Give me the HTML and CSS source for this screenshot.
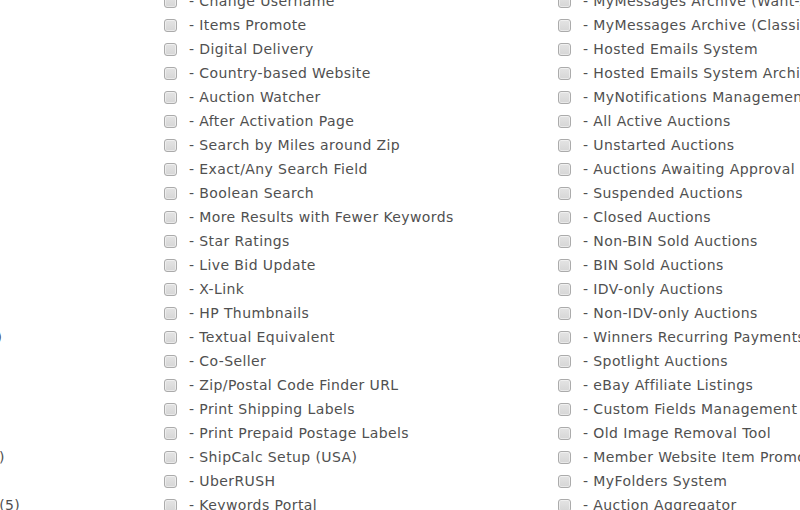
FILE: index.html
```html
<!DOCTYPE html>
<html>
<head>
<meta charset="utf-8">
<link rel="stylesheet" href="styles.css">
</head>
<body>
<div class="page">
  <div class="cols">
    <ul class="col">
      <li class="item"><span class="cb"></span><span class="lbl">- Featured Items</span></li>
      <li class="item"><span class="cb"></span><span class="lbl">- Bold Listing</span></li>
      <li class="item"><span class="cb"></span><span class="lbl">- Highlighted</span></li>
      <li class="item"><span class="cb"></span><span class="lbl">- Gallery Listing</span></li>
      <li class="item"><span class="cb"></span><span class="lbl">- Buy Out Option</span></li>
      <li class="item"><span class="cb"></span><span class="lbl">- Make Offer</span></li>
      <li class="item"><span class="cb"></span><span class="lbl">- Reserve Price</span></li>
      <li class="item"><span class="cb"></span><span class="lbl">- Quantity</span></li>
      <li class="item"><span class="cb"></span><span class="lbl">- Buy Now</span></li>
      <li class="item"><span class="cb"></span><span class="lbl">- Swap Items</span></li>
      <li class="item"><span class="cb"></span><span class="lbl">- Dutch Auctions</span></li>
      <li class="item"><span class="cb"></span><span class="lbl">- Wanted Ads</span></li>
      <li class="item"><span class="cb"></span><span class="lbl">- Classifieds</span></li>
      <li class="item"><span class="cb"></span><span class="lbl">- Bulk Lister</span></li>
      <li class="item"><span class="cb"></span><span class="lbl">- Second Chance Offer (sco)</span></li>
      <li class="item"><span class="cb"></span><span class="lbl">- Auto Relist</span></li>
      <li class="item"><span class="cb"></span><span class="lbl">- Stores</span></li>
      <li class="item"><span class="cb"></span><span class="lbl">- Shipping</span></li>
      <li class="item"><span class="cb"></span><span class="lbl">- Seller Fees</span></li>
      <li class="item"><span class="cb"></span><span class="lbl">- Reverse Auctions (Bidding)</span></li>
      <li class="item"><span class="cb"></span><span class="lbl">- Tax Settings</span></li>
      <li class="item"><span class="cb"></span><span class="lbl">- Additional Image Uploads (5)</span></li>
    </ul>
    <ul class="col">
      <li class="item"><span class="cb"></span><span class="lbl">- Change Username</span></li>
      <li class="item"><span class="cb"></span><span class="lbl">- Items Promote</span></li>
      <li class="item"><span class="cb"></span><span class="lbl">- Digital Delivery</span></li>
      <li class="item"><span class="cb"></span><span class="lbl">- Country-based Website</span></li>
      <li class="item"><span class="cb"></span><span class="lbl">- Auction Watcher</span></li>
      <li class="item"><span class="cb"></span><span class="lbl">- After Activation Page</span></li>
      <li class="item"><span class="cb"></span><span class="lbl">- Search by Miles around Zip</span></li>
      <li class="item"><span class="cb"></span><span class="lbl">- Exact/Any Search Field</span></li>
      <li class="item"><span class="cb"></span><span class="lbl">- Boolean Search</span></li>
      <li class="item"><span class="cb"></span><span class="lbl">- More Results with Fewer Keywords</span></li>
      <li class="item"><span class="cb"></span><span class="lbl">- Star Ratings</span></li>
      <li class="item"><span class="cb"></span><span class="lbl">- Live Bid Update</span></li>
      <li class="item"><span class="cb"></span><span class="lbl">- X-Link</span></li>
      <li class="item"><span class="cb"></span><span class="lbl">- HP Thumbnails</span></li>
      <li class="item"><span class="cb"></span><span class="lbl">- Textual Equivalent</span></li>
      <li class="item"><span class="cb"></span><span class="lbl">- Co-Seller</span></li>
      <li class="item"><span class="cb"></span><span class="lbl">- Zip/Postal Code Finder URL</span></li>
      <li class="item"><span class="cb"></span><span class="lbl">- Print Shipping Labels</span></li>
      <li class="item"><span class="cb"></span><span class="lbl">- Print Prepaid Postage Labels</span></li>
      <li class="item"><span class="cb"></span><span class="lbl">- ShipCalc Setup (USA)</span></li>
      <li class="item"><span class="cb"></span><span class="lbl">- UberRUSH</span></li>
      <li class="item"><span class="cb"></span><span class="lbl">- Keywords Portal</span></li>
    </ul>
    <ul class="col">
      <li class="item"><span class="cb"></span><span class="lbl">- MyMessages Archive (Want-Ads)</span></li>
      <li class="item"><span class="cb"></span><span class="lbl">- MyMessages Archive (Classifieds)</span></li>
      <li class="item"><span class="cb"></span><span class="lbl">- Hosted Emails System</span></li>
      <li class="item"><span class="cb"></span><span class="lbl">- Hosted Emails System Archive</span></li>
      <li class="item"><span class="cb"></span><span class="lbl">- MyNotifications Management</span></li>
      <li class="item"><span class="cb"></span><span class="lbl">- All Active Auctions</span></li>
      <li class="item"><span class="cb"></span><span class="lbl">- Unstarted Auctions</span></li>
      <li class="item"><span class="cb"></span><span class="lbl">- Auctions Awaiting Approval</span></li>
      <li class="item"><span class="cb"></span><span class="lbl">- Suspended Auctions</span></li>
      <li class="item"><span class="cb"></span><span class="lbl">- Closed Auctions</span></li>
      <li class="item"><span class="cb"></span><span class="lbl">- Non-BIN Sold Auctions</span></li>
      <li class="item"><span class="cb"></span><span class="lbl">- BIN Sold Auctions</span></li>
      <li class="item"><span class="cb"></span><span class="lbl">- IDV-only Auctions</span></li>
      <li class="item"><span class="cb"></span><span class="lbl">- Non-IDV-only Auctions</span></li>
      <li class="item"><span class="cb"></span><span class="lbl">- Winners Recurring Payments</span></li>
      <li class="item"><span class="cb"></span><span class="lbl">- Spotlight Auctions</span></li>
      <li class="item"><span class="cb"></span><span class="lbl">- eBay Affiliate Listings</span></li>
      <li class="item"><span class="cb"></span><span class="lbl">- Custom Fields Management</span></li>
      <li class="item"><span class="cb"></span><span class="lbl">- Old Image Removal Tool</span></li>
      <li class="item"><span class="cb"></span><span class="lbl">- Member Website Item Promotion</span></li>
      <li class="item"><span class="cb"></span><span class="lbl">- MyFolders System</span></li>
      <li class="item"><span class="cb"></span><span class="lbl">- Auction Aggregator</span></li>
    </ul>
  </div>
</div>
</body>
</html>
```
FILE: styles.css
```css
html, body {
  margin: 0;
  padding: 0;
  background: #fff;
  overflow: hidden;
}
body {
  font-family: "DejaVu Sans", Verdana, sans-serif;
  font-size: 14px;
  letter-spacing: 0.4px;
  color: #505050;
}
.page {
  width: 800px;
  height: 510px;
  overflow: hidden;
}
.cols {
  display: grid;
  grid-template-columns: 394px 394px 394px;
  margin-left: -230px;
  margin-top: -11px;
  white-space: nowrap;
}
.col {
  list-style: none;
  margin: 0;
  padding: 0;
  display: flex;
  flex-direction: column;
}
.item {
  height: 24px;
  display: flex;
  align-items: center;
  gap: 12px;
}
.cb {
  flex: none;
  width: 11px;
  height: 11px;
  margin-top: 1px;
  border: 1px solid #ababab;
  border-radius: 3px;
  background: linear-gradient(#e4e4e4, #d6d6d6);
  box-shadow: inset 0 0 0 1px rgba(255,255,255,0.45);
}
.lbl {
  line-height: 24px;
}
```
